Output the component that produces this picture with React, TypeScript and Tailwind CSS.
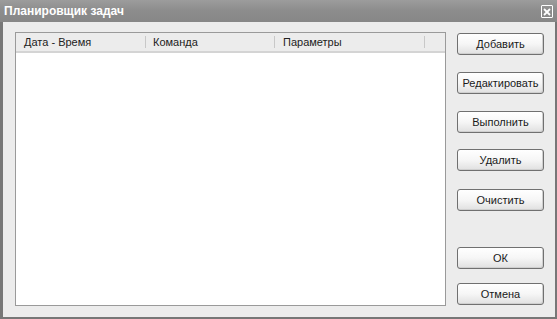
export default function App() {
  const btn =
    "h-[22px] w-[87px] rounded-[3px] border border-[#707070] bg-gradient-to-b from-white via-[#f6f6f6] to-[#e0e0e0] font-['Liberation_Sans',Arial,sans-serif] text-[11px] font-normal text-[#1a1a1a] flex items-center justify-center shadow-[inset_-1px_-1px_0_#cfcfcf]";
  return (
    <div
      className="w-[557px] h-[319px] bg-[#777777] flex flex-col overflow-hidden font-['Liberation_Sans',Arial,sans-serif]"
    >
      <div className="h-[22px] bg-gradient-to-b from-[#9c9c9c] via-[#8c8c8c] to-[#878787] flex items-center justify-between pl-[4px] pr-[4px] shrink-0">
        <span className="text-white font-bold text-[12px] leading-none">Планировщик задач</span>
        <div className="w-[12px] h-[13px] border-[1.5px] border-white rounded-[1px] flex items-center justify-center mt-[1px]">
          <svg width="8" height="8" viewBox="0 0 8 8">
            <path d="M1 1 L7 7 M7 1 L1 7" stroke="white" strokeWidth="1.8" />
          </svg>
        </div>
      </div>
      <div className="flex-1 ml-[3px] mb-[2px] mr-[2px] bg-[#ececec] flex pl-[12px] pt-[10px] pb-[11px] gap-[11px]">
        <div className="w-[431px] border border-[#9a9a9a] bg-white flex flex-col">
          <div className="h-[20px] bg-[#ececec] border-b-2 border-[#d4d4d4] flex text-[11px] font-normal text-[#222]">
            <div className="w-[130px] pl-[8px] flex items-center border-r border-[#c8c8c8] my-[3px]">Дата - Время</div>
            <div className="w-[129px] pl-[7px] flex items-center border-r border-[#c8c8c8] my-[3px]">Команда</div>
            <div className="w-[150px] pl-[8px] flex items-center border-r border-[#c8c8c8] my-[3px]">Параметры</div>
          </div>
        </div>
        <div className="flex flex-col pt-[1px]">
          <div role="button" className={btn}>Добавить</div>
          <div role="button" className={btn + " mt-[17px]"}>Редактировать</div>
          <div role="button" className={btn + " mt-[17px]"}>Выполнить</div>
          <div role="button" className={btn + " mt-[16px]"}>Удалить</div>
          <div role="button" className={btn + " mt-[18px]"}>Очистить</div>
          <div role="button" className={btn + " mt-[36px]"}>ОК</div>
          <div role="button" className={btn + " mt-[14px]"}>Отмена</div>
        </div>
      </div>
    </div>
  );
}
